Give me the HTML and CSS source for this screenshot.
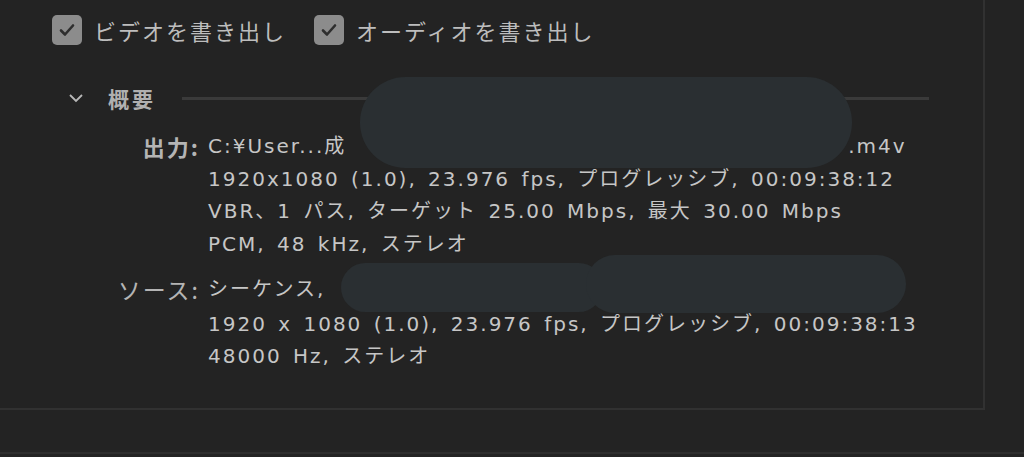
FILE: index.html
```html
<!DOCTYPE html>
<html lang="ja">
<head>
    <meta charset="UTF-8">
    <meta name="viewport" content="width=device-width, initial-scale=1.0">
    <title>書き出し設定</title>
    <link rel="stylesheet" href="styles.css">
</head>
<body>
    <div class="panel">
        <div class="exports">
            <label class="check">
                <span class="box"><svg width="20" height="20" viewBox="0 0 20 20"><path d="M4 10.5l4 4 8-9" fill="none" stroke="#2e2e2e" stroke-width="2.6" stroke-linecap="round" stroke-linejoin="round"/></svg></span>
                ビデオを書き出し
            </label>
            <label class="check">
                <span class="box"><svg width="20" height="20" viewBox="0 0 20 20"><path d="M4 10.5l4 4 8-9" fill="none" stroke="#2e2e2e" stroke-width="2.6" stroke-linecap="round" stroke-linejoin="round"/></svg></span>
                オーディオを書き出し
            </label>
        </div>

        <div class="section-head">
            <svg class="chevron" width="16" height="10" viewBox="0 0 16 10"><path d="M2 2l6 6 6-6" fill="none" stroke="#b8b8b8" stroke-width="1.8"/></svg>
            <span class="section-title">概要</span>
            <span class="rule"></span>
        </div>

        <div class="details">
            <div class="label">出力:</div>
            <div class="lines">
                <div>C:¥User...成<span class="ext">.m4v</span></div>
                <div>1920x1080 (1.0), 23.976 fps, プログレッシブ, 00:09:38:12</div>
                <div>VBR、1 パス, ターゲット 25.00 Mbps, 最大 30.00 Mbps</div>
                <div>PCM, 48 kHz, ステレオ</div>
            </div>
            <div class="label source">ソース:</div>
            <div class="lines source">
                <div class="first">シーケンス,</div>
                <div>1920 x 1080 (1.0), 23.976 fps, プログレッシブ, 00:09:38:13</div>
                <div>48000 Hz, ステレオ</div>
            </div>
        </div>

        <!-- 個人情報のマスク -->
        <div class="mask mask-path"></div>
        <div class="mask mask-seq1"></div>
        <div class="mask mask-seq2"></div>
    </div>
    <div class="footer"></div>
</body>
</html>
```

FILE: styles.css
```css
body {
    margin: 0;
    background-color: #232323;
    color: #c6c6c6;
    font-family: "Noto Sans CJK JP", "DejaVu Sans", sans-serif;
    overflow: hidden;
}

.panel {
    position: relative;
    width: 983px;
    height: 408px;
    border-right: 2px solid #313131;
    border-bottom: 2px solid #313131;
}

.exports {
    display: flex;
    gap: 28px;
    padding: 14px 0 0 52px;
}

.check {
    display: flex;
    align-items: center;
    gap: 12px;
    font-size: 22px;
    letter-spacing: 2px;
    line-height: 32px;
    color: #bdbdbd;
}

.box {
    width: 30px;
    height: 30px;
    border-radius: 5px;
    background-color: #8c8c8c;
    display: flex;
    align-items: center;
    justify-content: center;
}

.section-head {
    display: flex;
    align-items: center;
    margin: 40px 0 0 68px;
    height: 24px;
}

.chevron {
    margin-right: 24px;
}

.section-title {
    font-size: 21px;
    font-weight: bold;
    letter-spacing: 3px;
    color: #b0b0b0;
}

.rule {
    flex: 1;
    height: 3px;
    background-color: #3a3a3a;
    margin: 0 54px 0 26px;
}

.details {
    display: grid;
    grid-template-columns: 200px 1fr;
    column-gap: 8px;
    margin-top: 20px;
    font-family: "DejaVu Sans", "Noto Sans CJK JP", sans-serif;
    font-size: 20px;
    letter-spacing: 2px;
    line-height: 32.7px;
    color: #c6c6c6;
}

.label {
    text-align: right;
    font-family: "Noto Sans CJK JP", sans-serif;
    font-weight: bold;
    font-size: 22px;
    letter-spacing: 2px;
    color: #b4b4b4;
}

.label.source {
    font-weight: normal;
    font-size: 23px;
    letter-spacing: 2px;
}

.lines div {
    white-space: nowrap;
    word-spacing: 3px;
}

.source {
    margin-top: 12px;
}

.lines .first {
    margin-bottom: 2px;
}

.ext {
    margin-left: 502px;
}

.mask {
    position: absolute;
    background-color: #2a2f32;
}

.mask-path {
    left: 360px;
    top: 77px;
    width: 492px;
    height: 91px;
    border-radius: 46px;
}

.mask-seq1 {
    left: 341px;
    top: 263px;
    width: 262px;
    height: 49px;
    border-radius: 25px;
}

.mask-seq2 {
    left: 586px;
    top: 255px;
    width: 320px;
    height: 58px;
    border-radius: 29px;
}

.footer {
    margin-top: 42px;
    border-top: 2px solid #2e2e2e;
}
```
